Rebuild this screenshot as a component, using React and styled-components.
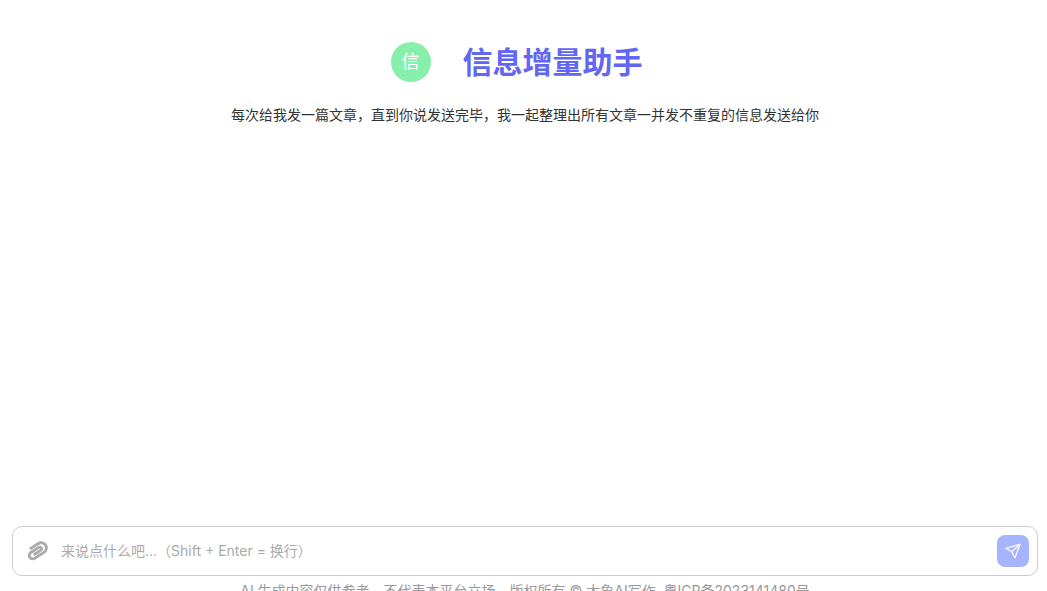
import React from 'react'
import styled, { createGlobalStyle } from 'styled-components'
import { AiOutlinePaperClip } from 'react-icons/ai'

const Global = createGlobalStyle`
  html, body {
    margin: 0;
    padding: 0;
    background: #fff;
    overflow: hidden;
  }
  body {
    font-family: Inter, "Noto Sans CJK SC", sans-serif;
  }
`

const Page = styled.div`
  height: 591px;
  overflow: hidden;
  display: flex;
  flex-direction: column;
`

const Main = styled.main`
  flex: 1;
  padding-top: 42px;
  display: flex;
  flex-direction: column;
  align-items: center;
`

const Header = styled.div`
  display: flex;
  align-items: center;
  gap: 32px;
  height: 40px;
  margin-left: -14px;
  margin-bottom: 23px;
`

const Avatar = styled.div`
  width: 40px;
  height: 40px;
  border-radius: 50%;
  background: #86efac;
  color: #fff;
  font-size: 18px;
  line-height: 40px;
  text-align: center;
`

const Title = styled.h1`
  margin: 0;
  font-size: 30px;
  line-height: 44px;
  font-weight: 700;
  color: #6366f1;
`

const Subtitle = styled.p`
  margin: 0 0 0 3px;
  font-size: 14px;
  line-height: 20px;
  color: #333;
`

const Composer = styled.div`
  flex: none;
  margin: 0 9px 0 12px;
  height: 50px;
  box-sizing: border-box;
  border: 1px solid #ccc;
  border-radius: 10px;
  background: #fff;
  display: flex;
  align-items: center;
  padding: 0 8px 0 14px;
`

const Attach = styled.button`
  border: 0;
  background: none;
  padding: 0;
  width: 22px;
  height: 22px;
  color: #aaa;
  display: flex;
  align-items: center;
  justify-content: center;
  cursor: pointer;

  svg {
    flex: none;
    stroke: currentColor;
    stroke-width: 40;
    transform: rotate(12deg);
  }
`

const Input = styled.input`
  flex: 1;
  min-width: 0;
  height: 20px;
  border: 0;
  outline: 0;
  margin: 0 0 1px 12px;
  padding: 0;
  font-size: 14px;
  font-family: inherit;
  color: #333;
  background: transparent;

  &::placeholder {
    color: #aaa;
    opacity: 1;
  }
`

const SendButton = styled.button`
  width: 32px;
  height: 32px;
  border: 0;
  padding: 0;
  border-radius: 8px;
  background: #a5b4fc;
  color: #fff;
  display: flex;
  align-items: center;
  justify-content: center;
  cursor: pointer;
`

const Footer = styled.footer`
  flex: none;
  box-sizing: border-box;
  height: 15px;
  padding-top: 5px;
  margin-left: 3px;
  text-align: center;
  font-size: 14px;
  line-height: 20px;
  color: #999;
  white-space: pre;
`

function PlaneIcon() {
  return (
    <svg width="16" height="16" viewBox="0 0 16 16" fill="none" stroke="currentColor" strokeWidth="1.2" strokeLinejoin="round">
      <path d="M15 1.3 1 5.3l5.7 3.4 3.3 6z" />
      <path d="M15 1.3 6.7 8.7" />
    </svg>
  )
}

export default function App() {
  return (
    <Page>
      <Global />
      <Main>
        <Header>
          <Avatar>信</Avatar>
          <Title>信息增量助手</Title>
        </Header>
        <Subtitle>每次给我发一篇文章，直到你说发送完毕，我一起整理出所有文章一并发不重复的信息发送给你</Subtitle>
      </Main>
      <Composer>
        <Attach>
          <AiOutlinePaperClip size={26} />
        </Attach>
        <Input placeholder="来说点什么吧...（Shift + Enter = 换行）" />
        <SendButton>
          <PlaneIcon />
        </SendButton>
      </Composer>
      <Footer>AI 生成内容仅供参考，不代表本平台立场，版权所有 © 大象AI写作  粤ICP备2023141480号</Footer>
    </Page>
  )
}
